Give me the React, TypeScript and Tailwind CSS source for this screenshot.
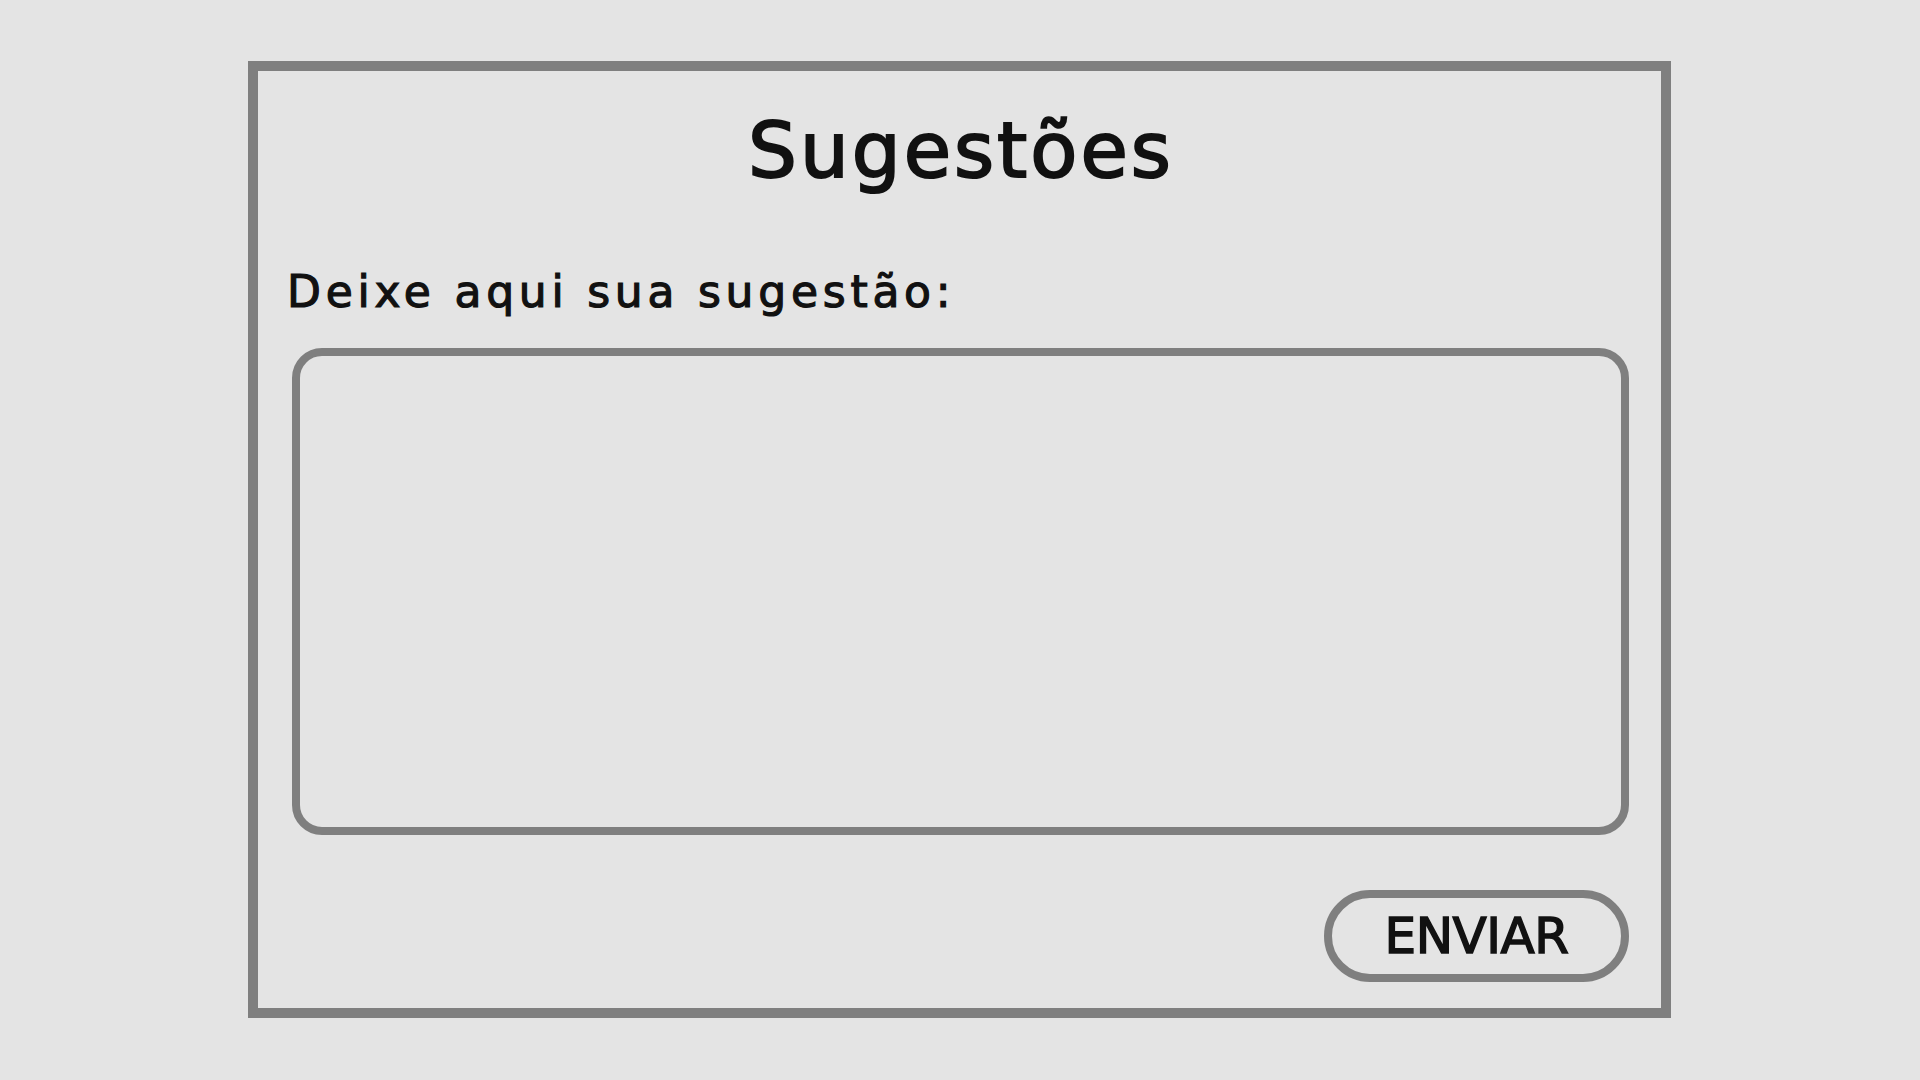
export default function App() {
  const font = { fontFamily: '"DejaVu Sans", sans-serif' };
  return (
    <div className="w-[1920px] h-[1080px] bg-[#e4e4e4] pt-[61px] pl-[248px]" style={font}>
      <div className="w-[1423px] h-[957px] border-[10px] border-[#7f7f7f] flex flex-col">
        <h1 className="mt-[41px] text-center text-[77px] leading-none font-normal text-[#111111] tracking-[3px] pl-[3px] [-webkit-text-stroke:2px_#111111]">
          Sugestões
        </h1>
        <div className="pl-[34px] pr-[32px] flex flex-col">
          <label className="mt-[81px] -ml-[5px] text-[44px] leading-none text-[#111111] tracking-[4.75px] [-webkit-text-stroke:1.2px_#111111]">
            Deixe aqui sua sugestão:
          </label>
          <textarea className="mt-[34px] w-[1337px] h-[487px] border-[8px] border-[#7f7f7f] rounded-[30px] bg-transparent resize-none outline-none" />
          <div className="mt-[55px] flex justify-end">
            <button className="w-[305px] h-[92px] border-[8px] border-[#7f7f7f] rounded-full bg-transparent flex items-center justify-center text-[50px] leading-none text-[#111111] tracking-[-0.5px] [-webkit-text-stroke:1.5px_#111111]">
              ENVIAR
            </button>
          </div>
        </div>
      </div>
    </div>
  );
}
